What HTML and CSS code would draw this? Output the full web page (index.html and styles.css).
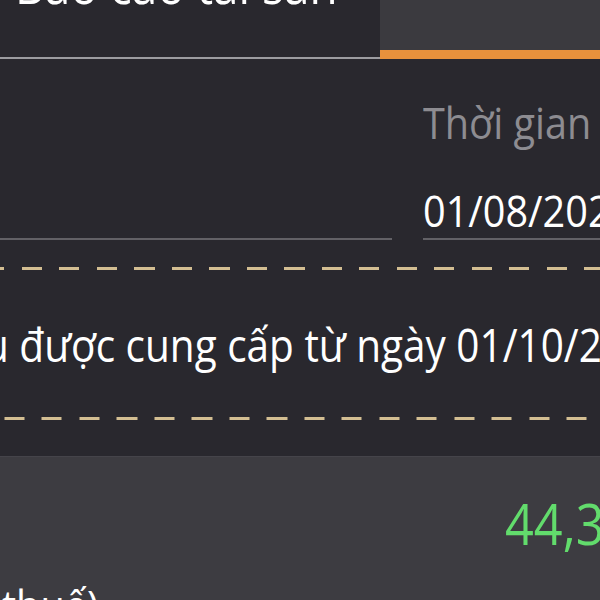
FILE: index.html
```html
<!DOCTYPE html>
<html lang="vi">
<head>
<meta charset="utf-8">
<link rel="stylesheet" href="styles.css">
</head>
<body>
<div class="screen">
  <div class="tabs">
    <div class="tab tab-active-left"><div class="title narrow">Báo cáo tài sản</div></div>
    <div class="tab tab-selected"></div>
  </div>
  <div class="main">
    <div class="fields">
      <div class="field field-left">
        <div class="label narrow">&nbsp;</div>
        <div class="value narrow">&nbsp;</div>
      </div>
      <div class="field field-right">
        <div class="label narrow">Thời gian</div>
        <div class="value narrow">01/08/2020</div>
      </div>
    </div>
    <div class="dash dash-one"></div>
    <div class="notice narrow">Dữ liệu được cung cấp từ ngày 01/10/2020</div>
    <div class="dash dash-two"></div>
  </div>
  <div class="panel">
    <div class="amount narrow">44,350,000</div>
    <div class="caption narrow">thuế)</div>
  </div>
</div>
</body>
</html>
```
FILE: styles.css
```css
html, body {
  margin: 0;
  padding: 0;
  background: #29282e;
}
.screen {
  width: 600px;
  height: 600px;
  overflow: hidden;
  display: flex;
  flex-direction: column;
  background: #29282e;
  font-family: "Open Sans", "Noto Sans", sans-serif;
  color: #ffffff;
}
.narrow {
  transform: scaleX(0.9);
  transform-origin: left top;
  white-space: nowrap;
}
.tabs {
  display: flex;
  height: 59px;
  flex: 0 0 59px;
}
.tab {
  box-sizing: border-box;
  height: 59px;
}
.tab-active-left {
  flex: 0 0 380px;
  border-bottom: 2px solid #9c9ca0;
  overflow: visible;
}
.title {
  font-size: 51px;
  line-height: 51px;
  margin-top: -41px;
  margin-left: 15px;
  color: #ffffff;
}
.tab-selected {
  flex: 1 1 auto;
  background: #3b3a3f;
  border-bottom: 9px solid #e8913c;
}
.main {
  flex: 0 0 397px;
  display: flex;
  flex-direction: column;
}
.fields {
  display: grid;
  grid-template-columns: 392px 1fr;
  column-gap: 31px;
  margin-top: 41px;
}
.field {
  display: flex;
  flex-direction: column;
  gap: 44px;
  padding-bottom: 6px;
  border-bottom: 2px solid #626166;
  min-width: 0;
}
.label {
  font-size: 44px;
  line-height: 44px;
  color: #8d8c91;
}
.value {
  font-size: 44px;
  line-height: 44px;
  color: #ffffff;
}
.dash {
  height: 3px;
  background-image: repeating-linear-gradient(to right, #d3be92 0 20px, transparent 20px 37.5px);
}
.dash-one {
  margin-top: 27px;
  background-position: 22px 0;
}
.dash-two {
  margin-top: 50px;
  background-position: 4.5px 0;
}
.notice {
  margin-top: 52px;
  font-size: 45px;
  line-height: 45px;
  margin-left: -126px;
}
.panel {
  flex: 1 0 auto;
  background: #3d3c41;
  border-top: 1px solid #45444a;
  display: flex;
  flex-direction: column;
}
.amount {
  margin-top: 38px;
  margin-left: 505px;
  font-size: 56px;
  line-height: 56px;
  color: #62dc6c;
}
.caption {
  margin-top: 32px;
  margin-left: 2px;
  font-size: 44px;
  line-height: 44px;
}
```
